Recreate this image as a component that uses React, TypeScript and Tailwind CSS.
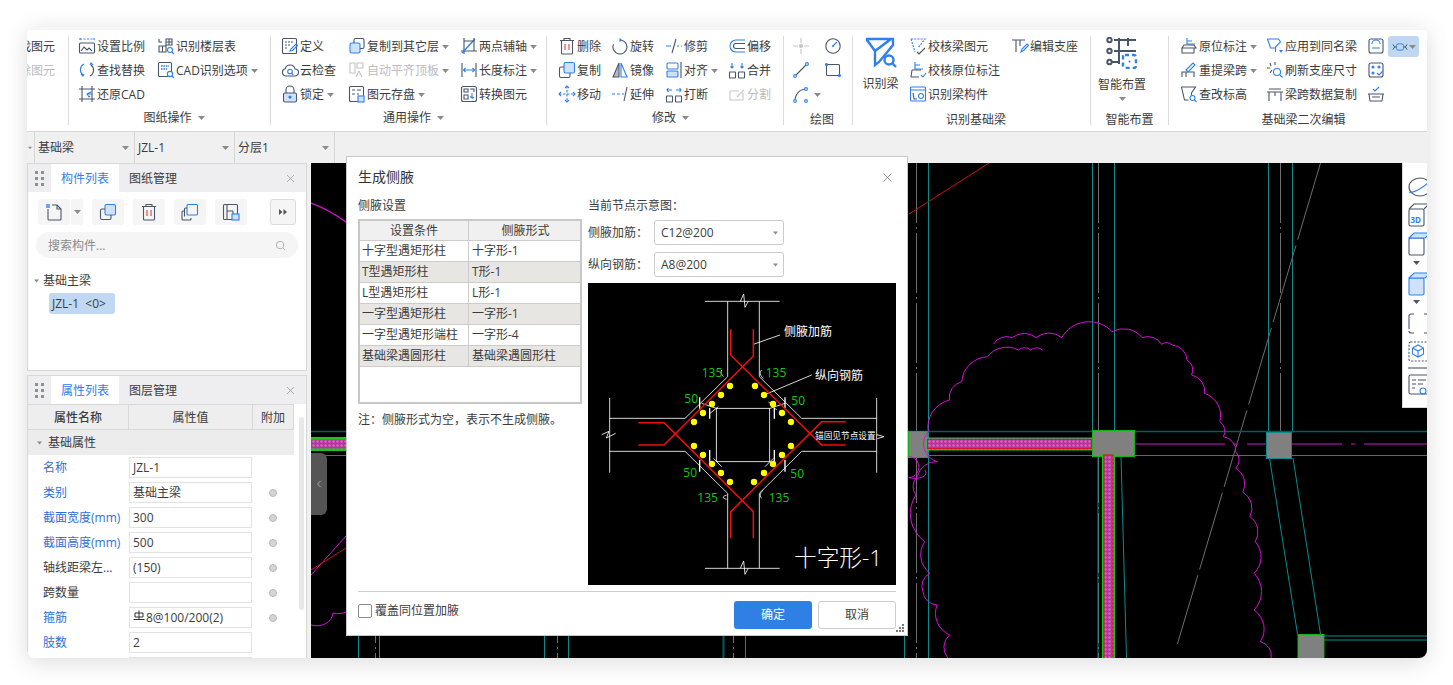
import type { ReactNode } from "react";
import { ChevronLeft, Search, X } from "lucide-react";

const G = "#4a5568";
const B = "#2f80ed";
const LB = "#cfe2fa";

function Ico({ children, size = 18 }: { children: ReactNode; size?: number }) {
  return (
    <svg width={size} height={size} viewBox="0 0 18 18" fill="none" stroke={G} strokeWidth="1.1" className="shrink-0">
      {children}
    </svg>
  );
}

function Caret({ className = "" }: { className?: string }) {
  return (
    <svg width="7" height="4" viewBox="0 0 7 4" className={`shrink-0 ${className}`}>
      <path d="M0 0h7L3.5 4z" fill="#8a8a8a" />
    </svg>
  );
}

const icons: Record<string, ReactNode> = {
  scale: (<><path d="M2 2h14M2 1v3M16 1v3" stroke={B} strokeDasharray="2 1.5" /><rect x="1.5" y="6" width="15" height="10" rx="1" /><path d="M3 14l3-4 3 3 2-2 3 3" /></>),
  floors: (<><path d="M2 2v3h3M9 2h6v6H9zM9 5h6M12 2v6M2 9h7v6H2zM5.5 9v6" /><circle cx="13" cy="13" r="2.5" stroke={B} /><path d="M15 15l2 2" stroke={B} /></>),
  replace: (<><path d="M6 3a6.5 6.5 0 0 0-1 11" stroke={B} /><path d="M12 15a6.5 6.5 0 0 0 1-11" /><path d="M3 13l2 2 1-2M12 4l1-2 2 2" stroke={B} /></>),
  cadopt: (<><rect x="1.5" y="1.5" width="13" height="14" rx="1" /><circle cx="13" cy="13" r="2.6" stroke={B} fill="#fff" /><path d="M15 15l2 2" stroke={B} /><path d="M4 5h8M4 8h6" stroke={B} strokeWidth="1.6" strokeDasharray="1.6 .8" /></>),
  restore: (<><path d="M4 1v16M14 1v16M1 4h16M1 14h16" /><path d="M13 7l-4 2 2 3 1-1M9 9h5" stroke={B} /></>),
  define: (<><rect x="1.5" y="1.5" width="14" height="15" rx="1" /><path d="M4 5h8M4 8h6M4 11h3" strokeDasharray="2 1" /><path d="M9 14l1-2 5-5 1.5 1.5-5 5z" stroke={B} /></>),
  cloud: (<><path d="M5 15a3.7 3.7 0 0 1-.7-7.3A5 5 0 0 1 14 8a3.5 3.5 0 0 1 0 7z" /><circle cx="9" cy="10.5" r="2.3" stroke={B} /><path d="M11 12.5l1.3 1.3" stroke={B} /></>),
  lock: (<><path d="M5 8V5a4 4 0 0 1 8 0v3" /><rect x="2.5" y="8" width="13" height="9" rx="1.5" fill={LB} /><path d="M9 11v3M7.5 12.5L9 11l1.5 1.5" stroke={B} /></>),
  copylayer: (<><rect x="6" y="1.5" width="10" height="10" rx="1.5" /><rect x="2" y="6" width="10" height="10" rx="1.5" fill={LB} stroke={B} /></>),
  autoalign: (<><g stroke="#c4c4c4"><path d="M2 2h5v10H2zM9 2h6v5H9zM11 10l-3 6M11 10l3 6" /></g></>),
  save: (<><rect x="1.5" y="1.5" width="14" height="15" rx="1" /><path d="M4 5h3M9 5h4M4 9h3M9 9h2" /><rect x="10" y="11" width="6" height="6" fill={LB} stroke={B} /></>),
  twopoint: (<><path d="M4 1v16M1 14h16" /><path d="M2 16L15 2" stroke={B} strokeWidth="1.4" /><path d="M14 1v13M4 4h10" /></>),
  length: (<><path d="M2 2v14M16 2v14" /><path d="M3.5 9h11M5.5 7l-2 2 2 2M12.5 7l2 2-2 2" stroke={B} /></>),
  convert: (<><rect x="1.5" y="1.5" width="15" height="15" rx="2" /><path d="M4 4h4v3H4zM4 10h4v4H4zM10 4h4v3" /><path d="M12 8v5l-2-1.5M14 12l-2 1.5" stroke={B} /></>),
  trash: (<><path d="M6 3V1.5h6V3M2 3.5h14M3.5 4v12a1 1 0 0 0 1 1h9a1 1 0 0 0 1-1V4" /><path d="M7 7v6M11 7v6" stroke="#e03c3c" /></>),
  rotate: (<><path d="M9 3a7 7 0 1 1-6.5 4.3" /><path d="M8.5 .8L11 3 8.5 5.2z" fill={B} stroke="none" /></>),
  trim: (<><path d="M1 9h5M12 9h2M16 9h1" stroke={B} /><path d="M11 2L7 16" /></>),
  offset: (<><path d="M17 3H8a6 6 0 0 0 0 12h9" stroke={B} /><path d="M17 6.5H8a2.5 2.5 0 0 0 0 5h9" /></>),
  copy: (<><rect x="6" y="1.5" width="10.5" height="10.5" rx="1.5" fill={LB} stroke={B} /><path d="M6 6H3a1.5 1.5 0 0 0-1.5 1.5V15A1.5 1.5 0 0 0 3 16.5h7.5A1.5 1.5 0 0 0 12 15v-3" /></>),
  mirror: (<><path d="M8 2L2 16h6z" fill="#b7bcc5" /><path d="M10 2l6 14h-6z" stroke={B} /></>),
  align: (<><rect x="2" y="2" width="11" height="6" rx="1" stroke={B} /><rect x="2" y="10" width="11" height="6" rx="1" fill={LB} stroke={B} /><path d="M16 1v16" /></>),
  merge: (<><rect x="1.5" y="11" width="6" height="6" rx=".5" /><rect x="10.5" y="11" width="6" height="6" rx=".5" /><path d="M4 2v5M2.5 5.5L4 7l1.5-1.5M14 2v5M12.5 5.5L14 7l1.5-1.5" stroke={B} /></>),
  move: (<><path d="M9 1v16M1 9h16" stroke={B} strokeDasharray="2.5 1.5" /><path d="M7 3l2-2 2 2M7 15l2 2 2-2M3 7L1 9l2 2M15 7l2 2-2 2" stroke={B} /></>),
  extend: (<><path d="M1 9h3M6 9h3M11 9h2" stroke={B} /><path d="M16 2l-3 14" /></>),
  breakp: (<><rect x="1.5" y="11" width="6" height="6" rx=".5" /><rect x="10.5" y="11" width="6" height="6" rx=".5" /><path d="M2 5h5M3.5 3L2 5l1.5 2M16 5h-5M14.5 3L16 5l-1.5 2" stroke={B} /></>),
  split: (<><g stroke="#c8c8c8"><path d="M2 6h9M2 6v9h13V8M9 12l7-7" /></g></>),
  point: (<><g stroke="#c6c6c6"><path d="M9 1v5M9 12v5M1 9h5M12 9h5" /><circle cx="9" cy="9" r="1.5" fill="#c6c6c6" /></g></>),
  circle: (<><circle cx="9" cy="9" r="7.2" /><path d="M9 9l4-4" stroke={B} /><circle cx="9" cy="9" r="1" fill={B} stroke="none" /></>),
  line: (<><path d="M3 15L15 3" /><circle cx="3" cy="15" r="1.4" fill="#fff" stroke={B} /><circle cx="15" cy="3" r="1.4" fill="#fff" stroke={B} /></>),
  rect: (<><rect x="2.5" y="3.5" width="13" height="11" rx="1" /><circle cx="2.5" cy="3.5" r="1" fill={B} stroke={B} /><circle cx="15.5" cy="14.5" r="1" fill={B} stroke={B} /></>),
  arc: (<><path d="M3 15C3 8 8 3 14 3" /><circle cx="3" cy="15" r="1.4" fill="#fff" stroke={B} /><circle cx="14" cy="3" r="1.4" fill="#fff" stroke={B} /><circle cx="14" cy="15" r="1.4" fill="#fff" stroke={B} /></>),
  checkbeam: (<><path d="M2 2h14L9 11" stroke={B} strokeDasharray="2 1.2" /><path d="M2 2l4 13" stroke={B} strokeDasharray="2 1.2" /><path d="M8 15l2 2 6-6" stroke={G} /></>),
  checkmark: (<><path d="M6 1v7h8M6 4h5" stroke={B} /><path d="M3 9h9M2 16l1-7M2 16h8" /><path d="M12 14l2 2 3-4" stroke={B} /></>),
  beamparts: (<><rect x="1.5" y="2" width="15" height="14" rx="1" stroke={B} /><path d="M1.5 5h15" stroke={B} /><path d="M4 8l1 6h3" /><circle cx="12" cy="11" r="2.5" stroke={B} /></>),
  editsup: (<><path d="M1 3h13M5 3v12M9 3v6" /><path d="M10 15l1-3 5-5 1.5 1.5-5 5z" stroke={B} /></>),
  posmark: (<><path d="M7 1v6h8M7 4h5" stroke={B} /><path d="M4 8h10l2 3H2l2-3zM2 11v5h12v-5" /></>),
  apply: (<><path d="M1.5 2h11l2 3-5 5v5" stroke={B} /><path d="M1.5 2l3 9h5" stroke={B} /><path d="M13 13l2 3 2-3z" fill={B} stroke="none" /></>),
  repick: (<><path d="M2 16v-5h12v5M6 11v5" /><path d="M6 9l7-7 2 2-7 7z" stroke={B} /></>),
  refresh: (<><path d="M4 2l1 3M1 7h3M4 12l2-3M9 1v3" /><circle cx="11" cy="11" r="3.5" stroke={B} /><path d="M14 14l2.5 2.5" stroke={B} /></>),
  chgelev: (<><path d="M1.5 2h14l-4 6v2M1.5 2l3 13h4" /><circle cx="12.5" cy="13" r="2.5" stroke={B} /><path d="M14.5 15l2 2" stroke={B} /></>),
  spancopy: (<><path d="M1 7h16M3 4h12M3 7v9M15 7v9M9 7v4" /></>),
  ed1: (<><rect x="2" y="2" width="14" height="14" rx="2" /><path d="M5 7a3 3 0 0 1 8 0M5 11h8" stroke={B} /></>),
  ed2: (<><rect x="2" y="2" width="14" height="14" rx="2" /><circle cx="6" cy="6" r="1" fill={B} stroke={B} /><circle cx="12" cy="6" r="1" fill={B} stroke={B} /><circle cx="6" cy="12" r="1" fill={B} stroke={B} /><path d="M10 12l2 2 4-4" stroke={B} /></>),
  ed3: (<><path d="M2 9l1 7h12l1-7M1 9h16M5 12h8" /><path d="M6 4l2 2 4-4" stroke={B} /></>),
  ed4: (<><path d="M1 6l2 3-2 3M17 6l-2 3 2 3M3 9h2M13 9h2" /><rect x="5" y="5.5" width="8" height="7" rx="2" stroke={B} /></>),
  newfile: (<><path d="M3 6v10a1 1 0 0 0 1 1h11a1 1 0 0 0 1-1V6l-4-4H7" /><path d="M12 2v4h4" /><rect x="1" y="1" width="4" height="4" fill={B} stroke="none" opacity=".7" /></>),
  layers: (<><rect x="6" y="1.5" width="10.5" height="10.5" rx="1" stroke={B} /><path d="M6 5H4.5A1 1 0 0 0 3.500 6v7.500M3 8H2a1 1 0 0 0-1 1v7a1 1 0 0 0 1 1h7a1 1 0 0 0 1-1v-1" /></>),
  savep: (<><rect x="1.500" y="1.500" width="14" height="15" rx="1" /><path d="M5 2v14M5 8h6M11 8v3" /><rect x="10" y="11" width="7" height="6" fill={LB} stroke={B} /></>),
};

function Item({ icon, text, caret, disabled }: { icon?: string; text?: string; caret?: boolean; disabled?: boolean }) {
  return (
    <div className={`flex h-6 items-center whitespace-nowrap text-xs ${disabled ? "text-[#bcbcbc]" : "text-[#3c3c3c]"}`}>
      {icon && <span className="-mt-[2px] w-[19px] shrink-0"><Ico>{icons[icon]}</Ico></span>}
      {text && <span>{text}</span>}
      {caret && <Caret className="ml-[3px]" />}
    </div>
  );
}

function Group({ className, label, arrow, children }: { className: string; label: string; arrow?: boolean; children: ReactNode }) {
  return (
    <div className={`flex shrink-0 flex-col ${className}`}>
      <div className="flex h-[76px] shrink-0 pt-[5px]">{children}</div>
      <div className={`flex shrink-0 items-center justify-center gap-[6px] text-xs text-[#3c3c3c] ${arrow ? "h-[24px]" : "h-[25px] pt-[2px]"}`}>
        {label}
        {arrow && <Caret />}
      </div>
    </div>
  );
}

const Sep = () => <div className="my-[6px] w-px shrink-0 bg-[#dcdcdc]" />;

function Ribbon() {
  return (
    <div className="flex h-[105px] shrink-0 border-t-[3px] border-b border-t-[#f6f6f6] border-b-[#d6d6d6] bg-white">
      <div className="flex w-[41px] shrink-0 flex-col items-end overflow-hidden pt-[5px] pr-[13px] text-xs whitespace-nowrap">
        <div className="flex h-6 shrink-0 items-center text-[#3c3c3c]">查找图元</div>
        <div className="flex h-6 shrink-0 items-center text-[#bcbcbc]">删除图元</div>
      </div>
      <Sep />
      <Group className="w-[201px] pl-[9px]" label="图纸操作" arrow>
        <div className="w-[79px]">
          <Item icon="scale" text="设置比例" />
          <Item icon="replace" text="查找替换" />
          <Item icon="restore" text="还原CAD" />
        </div>
        <div>
          <Item icon="floors" text="识别楼层表" />
          <Item icon="cadopt" text="CAD识别选项" caret />
        </div>
      </Group>
      <Sep />
      <Group className="w-[275px] pl-[10px]" label="通用操作" arrow>
        <div className="w-[67px]">
          <Item icon="define" text="定义" />
          <Item icon="cloud" text="云检查" />
          <Item icon="lock" text="锁定" caret />
        </div>
        <div className="w-[112px]">
          <Item icon="copylayer" text="复制到其它层" caret />
          <Item icon="autoalign" text="自动平齐顶板" caret disabled />
          <Item icon="save" text="图元存盘" caret />
        </div>
        <div>
          <Item icon="twopoint" text="两点辅轴" caret />
          <Item icon="length" text="长度标注" caret />
          <Item icon="convert" text="转换图元" />
        </div>
      </Group>
      <Sep />
      <Group className="w-[236px] pl-[11px]" label="修改" arrow>
        <div className="w-[53px]">
          <Item icon="trash" text="删除" />
          <Item icon="copy" text="复制" />
          <Item icon="move" text="移动" />
        </div>
        <div className="w-[54px]">
          <Item icon="rotate" text="旋转" />
          <Item icon="mirror" text="镜像" />
          <Item icon="extend" text="延伸" />
        </div>
        <div className="w-[63px]">
          <Item icon="trim" text="修剪" />
          <Item icon="align" text="对齐" caret />
          <Item icon="breakp" text="打断" />
        </div>
        <div>
          <Item icon="offset" text="偏移" />
          <Item icon="merge" text="合并" />
          <Item icon="split" text="分割" disabled />
        </div>
      </Group>
      <Sep />
      <Group className="w-[68px] pl-[8px]" label="绘图">
        <div className="w-[32px]">
          <Item icon="point" />
          <Item icon="line" />
          <div className="flex h-6 items-center">
            <Ico>{icons.arc}</Ico>
            <Caret className="ml-[4px]" />
          </div>
        </div>
        <div>
          <Item icon="circle" />
          <Item icon="rect" />
        </div>
      </Group>
      <Sep />
      <Group className="w-[237px] pl-[9px]" label="识别基础梁">
        <div className="flex w-[47px] flex-col items-center pt-[1px] pr-[10px] text-xs whitespace-nowrap text-[#3c3c3c]">
          <svg width="32" height="32" viewBox="0 0 32 32" fill="none" stroke={B} strokeWidth="2.4">
            <path d="M2 3h26v6L14 26l-4 3V15L2 4zM10 15L26 3" />
            <circle cx="24" cy="24" r="4.500" />
            <path d="M27 27l4 4" />
          </svg>
          <span className="mt-[8px]">识别梁</span>
        </div>
        <div className="w-[102px]">
          <Item icon="checkbeam" text="校核梁图元" />
          <Item icon="checkmark" text="校核原位标注" />
          <Item icon="beamparts" text="识别梁构件" />
        </div>
        <div>
          <Item icon="editsup" text="编辑支座" />
        </div>
      </Group>
      <Sep />
      <Group className="w-[77px]" label="智能布置">
        <div className="flex w-[62px] flex-col items-center pt-[2px] text-xs whitespace-nowrap text-[#3c3c3c]">
          <svg width="32" height="32" viewBox="0 0 32 32" fill="none" stroke={G} strokeWidth="2">
            <path d="M8 3h22M8 14h22M6 25h7M13 1v26M22 1v8" />
            <circle cx="3.500" cy="3" r="2.200" />
            <circle cx="3.500" cy="14" r="2.200" />
            <circle cx="3.500" cy="25" r="2.200" />
            <rect x="17" y="18" width="13" height="13" rx="2" stroke={B} strokeWidth="2.400" strokeDasharray="4 3" />
            <circle cx="23.500" cy="24.500" r="1" fill={B} stroke="none" />
          </svg>
          <span className="mt-[8px]">智能布置</span>
          <Caret className="mt-[4px]" />
        </div>
      </Group>
      <Sep />
      <Group className="grow pl-[11px]" label="基础梁二次编辑">
        <div className="w-[86px]">
          <Item icon="posmark" text="原位标注" caret />
          <Item icon="repick" text="重提梁跨" caret />
          <Item icon="chgelev" text="查改标高" />
        </div>
        <div className="w-[101px]">
          <Item icon="apply" text="应用到同名梁" />
          <Item icon="refresh" text="刷新支座尺寸" />
          <Item icon="spancopy" text="梁跨数据复制" />
        </div>
        <div className="w-[21px]">
          <Item icon="ed1" />
          <Item icon="ed2" />
          <Item icon="ed3" />
        </div>
        <div className="mt-px flex h-[21px] w-[31px] items-center justify-center gap-[1px] rounded-[3px] bg-[#bfd7f1]">
          <Ico size={16}>{icons.ed4}</Ico>
          <Caret />
        </div>
      </Group>
    </div>
  );
}

function ComboBar() {
  const cells = ["基础梁", "JZL-1", "分层1"];
  return (
    <div className="flex h-[31px] shrink-0 items-stretch bg-[#f0f0f0] text-xs text-[#3c3c3c]">
      <div className="flex w-[8px] items-center justify-end border-r border-[#d6d6d6] pr-[2px]">
        <Caret className="w-[4px]" />
      </div>
      {cells.map((c) => (
        <div key={c} className="flex w-[100px] items-center justify-between border-r border-[#d6d6d6] pr-[5px] pl-[3px]">
          <span>{c}</span>
          <Caret />
        </div>
      ))}
    </div>
  );
}

function PanelHeader({ active, other }: { active: string; other: string }) {
  return (
    <div className="flex h-[28px] shrink-0 items-stretch bg-[#eeeef0] text-xs">
      <div className="grid w-[23px] grid-cols-[3px_3px] content-center justify-center gap-x-[3px] gap-y-[3px]">
        {[0, 1, 2, 3, 4, 5].map((i) => (
          <span key={i} className="h-[3px] bg-[#8b8f96]" />
        ))}
      </div>
      <div className="flex w-[68px] items-center justify-center bg-white pt-[2px] text-[#2f80ed]">{active}</div>
      <div className="flex w-[68px] items-center justify-center pt-[2px] text-[#3c3c3c]">{other}</div>
      <div className="flex grow items-center justify-end pr-[9px]">
        <X size={13} color="#9a9a9a" strokeWidth={1.5} />
      </div>
    </div>
  );
}

function ToolBtn({ icon, className = "" }: { icon: string; className?: string }) {
  return (
    <div className={`flex h-[26px] w-8 items-center justify-center rounded-[3px] bg-[#f5f5f5] ${className}`}>
      <Ico>{icons[icon]}</Ico>
    </div>
  );
}

function ComponentPanel() {
  return (
    <div className="flex h-[208px] shrink-0 flex-col border border-[#d8d8d8] bg-white">
      <PanelHeader active="构件列表" other="图纸管理" />
      <div className="flex pt-[7px] pl-[10px]">
        <ToolBtn icon="newfile" />
        <div className="ml-px flex h-[26px] w-3 items-center justify-center rounded-r-[3px] bg-[#f5f5f5]">
          <Caret />
        </div>
        <ToolBtn icon="copy" className="ml-[9px]" />
        <ToolBtn icon="trash" className="ml-[9px]" />
        <ToolBtn icon="layers" className="ml-[9px]" />
        <ToolBtn icon="savep" className="ml-[9px]" />
        <div className="ml-[23px] flex h-[26px] w-[26px] items-center justify-center rounded-[3px] border border-[#dcdcdc] bg-[#f5f5f5]">
          <svg width="8" height="6" viewBox="0 0 8 6" fill="#555">
            <path d="M0 0l3.500 3L0 6zM4.500 0L8 3 4.500 6z" />
          </svg>
        </div>
      </div>
      <div className="mx-2 mt-[7px] flex h-[26px] items-center justify-between rounded-full bg-[#f5f5f5] px-[12px] pt-px text-xs text-[#8a8a8a]">
        搜索构件...
        <Search size={11} color="#aaa" />
      </div>
      <div className="mt-[13px] flex h-[18px] items-center pt-px text-xs text-[#3c3c3c]">
        <Caret className="mr-[4px] ml-[6px] w-[5px]" />
        基础主梁
      </div>
      <div className="mt-[4px] ml-[21px] flex h-[21px] w-[66px] items-center rounded-[3px] bg-[#c0d8f2] pl-[3px] text-xs whitespace-nowrap text-[#3c3c3c]">
        JZL-1&nbsp;&nbsp;&lt;0&gt;
      </div>
    </div>
  );
}

const props: { name: string; value: ReactNode; blue?: boolean; dot?: boolean }[] = [
  { name: "名称", value: "JZL-1", blue: true },
  { name: "类别", value: "基础主梁", blue: true, dot: true },
  { name: "截面宽度(mm)", value: "300", blue: true, dot: true },
  { name: "截面高度(mm)", value: "500", blue: true, dot: true },
  { name: "轴线距梁左...", value: "(150)", dot: true },
  { name: "跨数量", value: "", dot: true },
  {
    name: "箍筋",
    value: (
      <span className="flex items-center">
        <svg width="12" height="12" viewBox="0 0 12 12" fill="none" stroke="#333" strokeWidth="1" className="-mt-[3px] mr-px">
          <path d="M2 3h8v4H2zM6 .5V9M.5 9.500h11" />
        </svg>
        8@100/200(2)
      </span>
    ),
    blue: true,
    dot: true,
  },
  { name: "肢数", value: "2", blue: true },
  { name: "", value: "" },
];

function PropertyPanel() {
  return (
    <div className="flex min-h-0 grow flex-col overflow-hidden border-x border-t border-[#d8d8d8] bg-white">
      <PanelHeader active="属性列表" other="图层管理" />
      <div className="flex min-h-0 grow">
        <div className="w-[266px] shrink-0 text-xs">
          <div className="grid h-[26px] grid-cols-[101px_124px_41px] border-y border-[#d8d8d8] bg-[#eeeeee] text-[#3c3c3c]">
            <div className="flex items-center justify-center border-r border-[#d8d8d8] pt-[2px] font-medium">属性名称</div>
            <div className="flex items-center justify-center border-r border-[#d8d8d8] pt-[2px]">属性值</div>
            <div className="flex items-center justify-center border-r border-[#d8d8d8] pt-[2px]">附加</div>
          </div>
          <div className="flex h-[25px] items-center bg-[#ececec] text-[#3c3c3c]">
            <Caret className="mr-[6px] ml-[9px] w-[5px]" />
            基础属性
          </div>
          {props.map((p, i) => (
            <div key={i} className="flex h-[25px] items-center">
              <div className={`w-[101px] pl-[15px] whitespace-nowrap ${p.blue ? "text-[#2f6fd8]" : "text-[#3c3c3c]"}`}>{p.name}</div>
              <div className="flex h-[21px] w-[123px] items-center border border-[#e2e2e2] pl-[3px] text-[#3c3c3c]">{p.value}</div>
              {p.dot && <span className="ml-[17px] h-2 w-2 rounded-full border border-[#b8b8b8] bg-[#d4d4d4]" />}
            </div>
          ))}
        </div>
        <div className="mt-[13px] ml-[5px] h-[193px] w-[5px] rounded-full bg-[#e8e8e8]" />
      </div>
    </div>
  );
}

const HATCH = "url(#hatch)";

// each point is [x, y] or [x, y, bulge]; bulge is the radius as a share of the chord
function cloud(points: number[][]) {
  return points
    .map(([x, y, k = 0.75], i) => {
      if (i === 0) return `M${x} ${y}`;
      const [px, py] = points[i - 1];
      const r = Math.hypot(x - px, y - py) * k;
      return `A${r} ${r} 0 0 1 ${x} ${y}`;
    })
    .join(" ");
}

function CadCanvas() {
  const outer = cloud([[265, 567], [318, 548], [385, 548], [458, 548], [600, 530, 0.6], [685, 548], [740, 568], [770, 570], [812, 615], [825, 660], [862, 715], [905, 800], [915, 845], [950, 890], [950, 940], [970, 1012], [990, 1085], [1005, 1160], [1002, 1255], [1002, 1365], [1020, 1460], [1050, 1509]]);
  const inner = cloud([[135, 1509], [140, 1440], [105, 1350], [65, 1310], [85, 1255], [70, 1160], [45, 1020], [50, 965], [105, 920], [80, 830, 0.6], [140, 735], [175, 680], [248, 605], [335, 585], [370, 585], [403, 585]]);
  return (
    <svg viewBox="311 163 1116 495" className="block h-full w-full bg-black" fill="none" strokeWidth="1">
      <defs>
        <pattern id="hatch" width="4" height="4" patternUnits="userSpaceOnUse">
          <rect width="4" height="4" fill="#e414c4" />
          <circle cx="1.500" cy="1.500" r="1.200" fill="#3fcf3f" />
        </pattern>
      </defs>
      {/* verticals */}
      {[358, 379, 544, 568, 745, 904, 928, 1092, 1114, 1268, 1292].map((x) => (
        <path key={x} d={`M${x}.5 163V${x === 1092 || x === 1114 || x === 1268 || x === 1292 ? 431 : 658}`} stroke="#0b8c8c" />
      ))}
      <path d="M723.500 163V658" stroke="#0a5a5a" strokeWidth="2" />
      {[375, 557, 733, 916, 1098, 1280].map((x) => (
        <path key={x} d={`M${x}.5 163V${x === 1280 ? 431 : 658}`} stroke="#6e6e6e" strokeDasharray="60 4 2 4" />
      ))}
      <path d="M1098 457V658M1121 456L1126.500 658M1269.500 458L1297.500 634M1293 458L1320.500 634" stroke="#0b8c8c" />
      <path d="M1320.500 163L1177.400 644" stroke="#6e6e6e" strokeDasharray="80 6" />
      {/* horizontal beam lines */}
      <path d="M311 431.500H1427" stroke="#0a5a5a" strokeWidth="1.500" />
      <path d="M311 455.500H1427" stroke="#0b8c8c" />
      <path d="M311 444H1427" stroke="#8a0f8a" strokeWidth="1.500" strokeDasharray="95 9 4 9" />
      <path d="M1324 636H1427M1324 640H1427" stroke="#0b8c8c" />
      {/* columns */}
      <rect x="908.500" y="431.500" width="19" height="26" fill="#808080" stroke="#14b414" />
      <rect x="1092.500" y="430.500" width="42" height="26" fill="#808080" stroke="#14b414" />
      <rect x="1266.500" y="432.500" width="25" height="26" fill="#808080" stroke="#0b8c8c" />
      <rect x="1298" y="634.500" width="26" height="30" fill="#808080" stroke="#14b414" />
      {/* beams */}
      <rect x="311" y="437" width="36" height="14" fill="#14c814" />
      <rect x="311" y="439.500" width="36" height="9" fill={HATCH} />
      <rect x="927" y="438" width="165" height="12" fill={HATCH} stroke="#14c814" />
      <rect x="927.500" y="439.500" width="164" height="9" stroke="#e01030" />
      <rect x="1102.500" y="454" width="12" height="210" fill={HATCH} stroke="#14c814" />
      <rect x="1104" y="455" width="9" height="210" stroke="#e01030" />
      {/* loose lines */}
      <path d="M909 214L989 163" stroke="#d01010" />
      <path d="M311 203C325 208 335 214 346 222" stroke="#d810d8" strokeWidth="1.300" />
      <path d="M311 575L346 536" stroke="#d810d8" />
      <path d="M311 570L346 548" stroke="#d01010" />
      <path d="M311 625C322 628 332 622 333 613C338 614 342 614 346 612" stroke="#d810d8" />
      <g transform="translate(900 155) scale(0.3534 0.3333)">
        <path d={outer} stroke="#d810d8" vectorEffect="non-scaling-stroke" />
        <path d={inner} stroke="#d810d8" vectorEffect="non-scaling-stroke" />
        <path d="M25 905C60 905 65 965 25 968C50 975 85 965 70 945" stroke="#d810d8" vectorEffect="non-scaling-stroke" />
      </g>
    </svg>
  );
}

function SidePanel() {
  return (
    <div className="absolute top-0 right-0 flex h-[245px] w-[25px] flex-col overflow-hidden border-b border-l border-[#d8d8d8] bg-white pl-[5px]">
      <svg width="24" height="245" viewBox="0 0 24 245" fill="none" stroke={G} strokeWidth="1.100" className="shrink-0">
        <ellipse cx="12" cy="24" rx="11" ry="9" />
        <path d="M1 29C5 31 20 22 23 16" stroke={B} />
        <rect x="1" y="46" width="15" height="17" rx="1.500" />
        <path d="M1 46l5-5h17M16 46l5-5" />
        <text x="2.500" y="60" fontSize="8" fontWeight="700" fill={B} stroke="none">3D</text>
        <rect x="1" y="75" width="15" height="17" rx="1.500" />
        <path d="M1 75l5-5h17l-6 5z" fill={LB} stroke={B} />
        <path d="M5 98h7l-3.500 4z" fill="#555" stroke="none" />
        <rect x="1" y="115" width="15" height="17" rx="1.500" fill={LB} stroke={B} />
        <path d="M1 115l5-5h17l-6 5z" fill={LB} stroke={B} />
        <path d="M5 137h7l-3.500 4z" fill="#555" stroke="none" />
        <path d="M1 166v-13a2 2 0 0 1 2-2h3M1 168a2 2 0 0 0 2 2h3M16 151h8M16 170h8" />
        <rect x="1" y="179" width="24" height="19" rx="1.500" strokeDasharray="2 1.500" />
        <path d="M10 182l5.500 3v6l-5.500 3-5.500-3v-6zM4.500 185l5.500 3 5.500-3M10 188v6" stroke={B} />
        <path d="M-1 205H24" />
        <rect x="1" y="212" width="24" height="19" rx="1.500" />
        <path d="M4 217h4M10 217h8M4 221h4M10 221h5M4 225h3" />
        <circle cx="15" cy="228" r="3" stroke={B} />
      </svg>
    </div>
  );
}

function Diagram() {
  const dots: [number, number][] = [[435, 318], [408, 345], [381, 372], [354, 399], [327, 426], [510, 318], [537, 345], [564, 372], [591, 399], [618, 426], [327, 498], [354, 525], [381, 552], [408, 579], [435, 606], [618, 498], [591, 525], [564, 552], [537, 579], [507, 606]];
  const green: [number, number, string][] = [[350, 292, "135"], [542, 290, "135"], [298, 368, "50"], [619, 374, "50"], [295, 590, "50"], [616, 593, "50"], [337, 665, "135"], [551, 665, "135"]];
  return (
    <svg viewBox="9 9 924 906" className="mt-[6px] block h-[302px] w-[308px] bg-black" fill="none" stroke="#fff" strokeWidth="2.500">
      <path d="M360 64H584M428 64V290M523 64V290M360 865H584M428 640V865M523 640V865M74 354V578M74 415H300M74 514H300M875 354V578M650 415H875M650 514H875" />
      <path d="M466 64l10-22 4 40 10-18M466 865l10-22 4 40 10-18M50 464l22-10-8 20 28-14M875 464l22 6-20 6" />
      <path d="M523 290L650 415M428 290L300 415M300 514L428 640M650 514L523 640" />
      <rect x="394" y="385" width="160" height="160" />
      <path d="M344 352V390M374 384V416M600 352V385M568 384V416M344 540V575M374 510V545M600 540V575M568 510V545" strokeWidth="4" />
      <path d="M350 370L394 385M400 380L375 400M550 365L575 390M540 560L565 535M385 535L410 560M600 370L555 385" />
      <path d="M505 193L585 165M537 345L680 285" />
      <path d="M410 270C405 280 412 285 415 290M530 270C520 280 530 290 535 296M425 645C410 650 412 655 425 658M535 630C522 640 525 650 530 655" />
      <g stroke="#f40d0d" strokeWidth="4.500">
        <path d="M437 148V225L710 495H782" />
        <path d="M505 148V228L237 495H160" />
        <path d="M160 428H237L505 695V775" />
        <path d="M782 425H710L437 695V775" />
      </g>
      {dots.map(([x, y]) => (
        <circle key={`${x}-${y}`} cx={x} cy={y} r="9.500" fill="#ffff00" stroke="none" />
      ))}
      <g stroke="none">
        {green.map(([x, y, t]) => (
          <text key={`${x}-${y}`} x={x} y={y} fontSize="36" fill="#0fc80f">{t}</text>
        ))}
        <text x="597" y="168" fontSize="36" fill="#fff">侧腋加筋</text>
        <text x="690" y="300" fontSize="36" fill="#fff">纵向钢筋</text>
        <text x="690" y="476" fontSize="26" fill="#fff">锚固见节点设置</text>
        <text x="627" y="858" fontSize="68" fontWeight="300" fill="#fff">十字形-1</text>
      </g>
    </svg>
  );
}

function Select({ value }: { value: string }) {
  return (
    <div className="flex h-[25px] w-[130px] items-center justify-between rounded-[3px] border border-[#cccccc] pr-[5px] pl-[6px] text-[#3c3c3c]">
      {value}
      <Caret className="w-[5px]" />
    </div>
  );
}

function SideDialog() {
  const rows = [
    ["十字型遇矩形柱", "十字形-1"],
    ["T型遇矩形柱", "T形-1"],
    ["L型遇矩形柱", "L形-1"],
    ["一字型遇矩形柱", "一字形-1"],
    ["一字型遇矩形端柱", "一字形-4"],
    ["基础梁遇圆形柱", "基础梁遇圆形柱"],
  ];
  return (
    <div className="absolute top-[129px] left-[319px] flex h-[480px] w-[562px] flex-col border border-[#c8c8c8] bg-white text-xs text-[#3c3c3c]">
      <div className="flex h-[40px] shrink-0 items-center justify-between pr-[12px] pl-[11px] text-sm text-[#333]">
        生成侧腋
        <X size={15} color="#777" strokeWidth={1.2} />
      </div>
      <div className="flex min-h-0 grow pl-[11px]">
        <div className="w-[230px] shrink-0">
          <div className="flex h-[18px] items-center">侧腋设置</div>
          <div className="mt-[4px] h-[185px] w-[224px] border-2 border-[#c8c8c8]">
            <div className="grid h-[20px] grid-cols-[109px_113px] bg-[#f0f0f0]">
              <div className="flex items-center justify-center border-r border-b border-[#cccccc] pt-px">设置条件</div>
              <div className="flex items-center justify-center border-b border-[#cccccc] pt-px">侧腋形式</div>
            </div>
            {rows.map(([a, b], i) => (
              <div key={a} className={`grid h-[21px] grid-cols-[109px_113px] ${i % 2 ? "bg-[#e7e6e3]" : "bg-white"}`}>
                <div className="flex items-center border-r border-b border-[#cccccc] pl-[2px] whitespace-nowrap">{a}</div>
                <div className="flex items-center border-b border-[#cccccc] pl-[3px] whitespace-nowrap">{b}</div>
              </div>
            ))}
          </div>
          <div className="mt-[8px]">注：侧腋形式为空，表示不生成侧腋。</div>
        </div>
        <div className="w-[308px]">
          <div className="flex h-[18px] items-center">当前节点示意图：</div>
          <div className="mt-[5px] flex items-center">
            <span className="w-[66px]">侧腋加筋：</span>
            <Select value="C12@200" />
          </div>
          <div className="mt-[7px] flex items-center">
            <span className="w-[66px]">纵向钢筋：</span>
            <Select value="A8@200" />
          </div>
          <Diagram />
        </div>
      </div>
      <div className="mx-[11px] mb-[6px] flex h-[38px] shrink-0 items-end justify-between border-t border-[#cccccc]">
        <label className="mb-[10px] flex items-center gap-[3px]">
          <span className="h-[14px] w-[14px] rounded-[2px] border border-[#8a8a8a] bg-white" />
          覆盖同位置加腋
        </label>
        <div className="flex gap-[6px]">
          <div className="flex h-[28px] w-[78px] items-center justify-center rounded-[3px] bg-[#2f80e4] text-white">确定</div>
          <div className="flex h-[28px] w-[78px] items-center justify-center rounded-[3px] border border-[#cccccc]">取消</div>
        </div>
      </div>
      <div className="absolute right-[3px] bottom-[3px] grid grid-cols-3 gap-px">
        {[0, 0, 1, 0, 1, 1, 1, 1, 1].map((on, i) => (
          <span key={i} className={`h-[2px] w-[2px] ${on ? "bg-[#777]" : ""}`} />
        ))}
      </div>
    </div>
  );
}

export default function App() {
  return (
    <div className="h-[685px] w-[1453px] overflow-hidden bg-white pt-[27px] pl-[27px] font-['Open_Sans','Noto_Sans_CJK_SC',sans-serif]">
      <div className="relative flex h-[631px] w-[1400px] flex-col overflow-hidden rounded-[8px] shadow-[0_4px_24px_rgba(0,0,0,0.14)]">
        <Ribbon />
        <ComboBar />
        <div className="flex min-h-0 grow bg-[#f0f0f0]">
          <div className="flex w-[280px] shrink-0 flex-col gap-[4px]">
            <ComponentPanel />
            <PropertyPanel />
          </div>
          <div className="relative ml-[4px] min-w-0 grow">
            <CadCanvas />
            <div className="absolute top-[290px] left-0 flex h-[62px] w-[16px] items-center justify-center rounded-r-[6px] bg-[#555555]">
              <ChevronLeft size={12} color="#aaa" />
            </div>
            <SidePanel />
          </div>
        </div>
        <SideDialog />
      </div>
    </div>
  );
}
